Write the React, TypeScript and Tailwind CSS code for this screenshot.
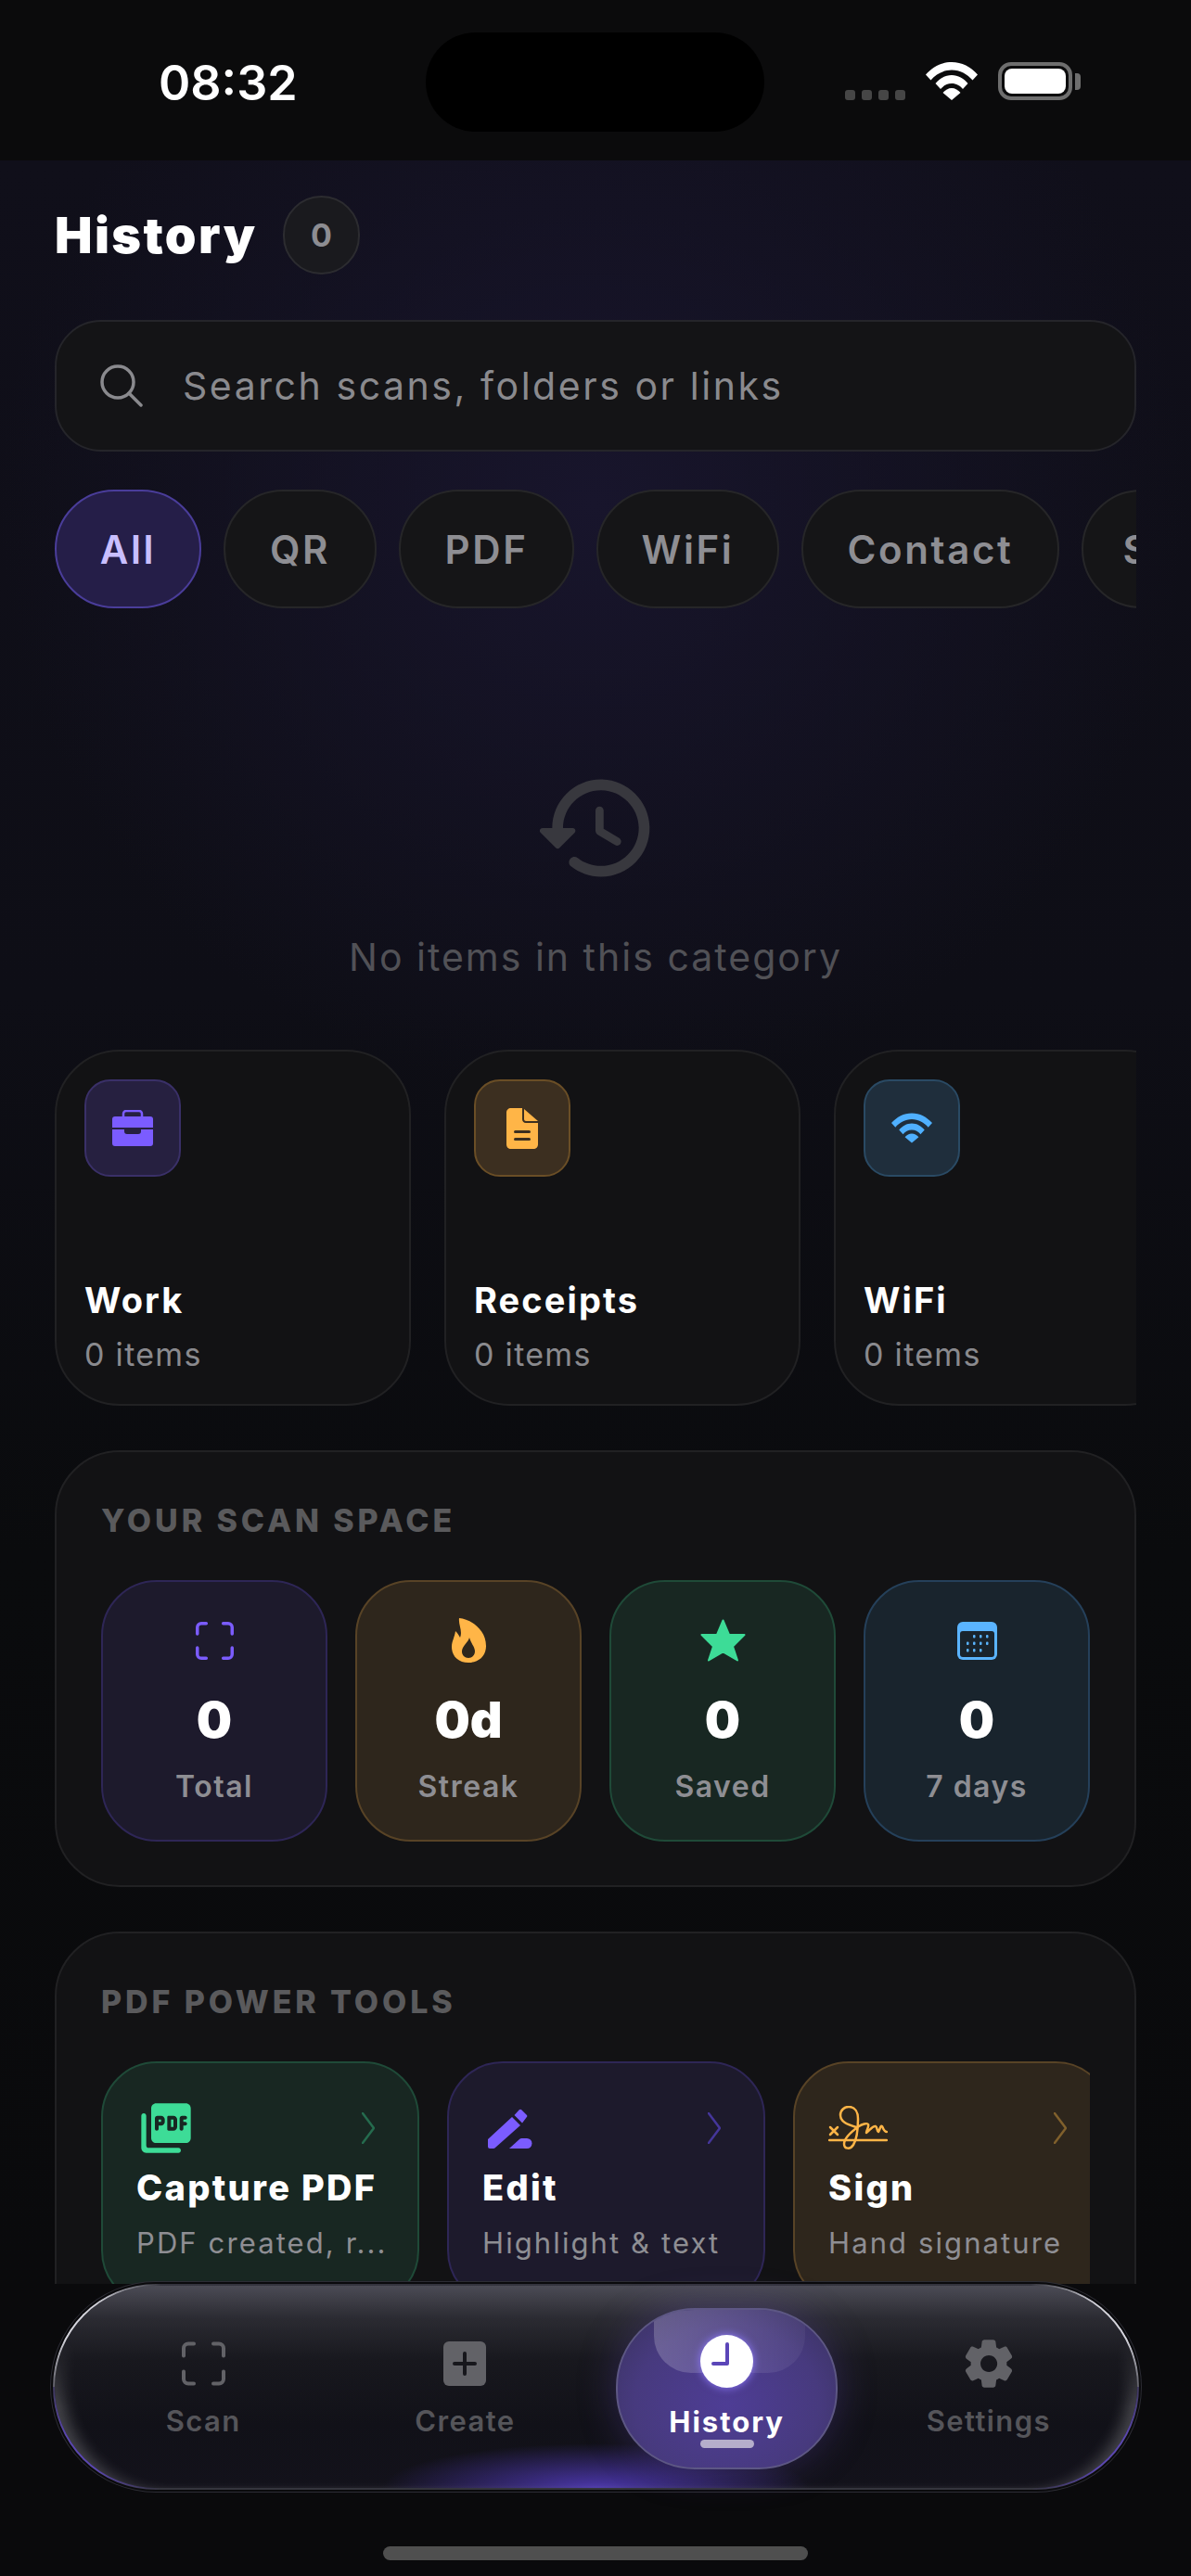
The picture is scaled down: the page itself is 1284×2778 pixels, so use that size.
import React from 'react';

const HistoryPath = 'M13.26 3C8.17 2.86 4 6.95 4 12H2.21c-.45 0-.67.54-.35.85l2.79 2.8c.2.2.51.2.71 0l2.79-2.8c.31-.31.09-.85-.36-.85H6c0-3.9 3.18-7.05 7.1-7 3.72.05 6.85 3.18 6.9 6.9.05 3.91-3.1 7.1-7 7.1-1.61 0-3.1-.55-4.28-1.48-.4-.31-.96-.28-1.32.08-.42.42-.39 1.13.08 1.49C9 20.29 10.91 21 13 21c5.05 0 9.14-4.17 9-9.26-.13-4.69-4.05-8.61-8.74-8.74zm-.51 5c-.41 0-.75.34-.75.75v3.68c0 .35.19.68.49.86l3.12 1.85c.36.21.82.09 1.03-.26.21-.36.09-.82-.26-1.03l-2.88-1.71v-3.4c0-.4-.34-.74-.75-.74z';
const PdfPath = 'M20 2H8c-1.1 0-2 .9-2 2v12c0 1.1.9 2 2 2h12c1.1 0 2-.9 2-2V4c0-1.1-.9-2-2-2zm-8.5 7.5c0 .83-.67 1.5-1.5 1.5H9v1.25c0 .41-.34.75-.75.75s-.75-.34-.75-.75V8c0-.55.45-1 1-1H10c.83 0 1.5.67 1.5 1.5v1zm5 2c0 .83-.67 1.5-1.5 1.5h-2c-.28 0-.5-.22-.5-.5v-5c0-.28.22-.5.5-.5h2c.83 0 1.5.67 1.5 1.5v3zm4-3.75c0 .41-.34.75-.75.75H19v1h.75c.41 0 .75.34.75.75s-.34.75-.75.75H19v1.25c0 .41-.34.75-.75.75s-.75-.34-.75-.75V8c0-.55.45-1 1-1h1.25c.41 0 .75.34.75.75zM9 9.5h1v-1H9v1zM3 6c-.55 0-1 .45-1 1v13c0 1.1.9 2 2 2h13c.55 0 1-.45 1-1s-.45-1-1-1H5c-.55 0-1-.45-1-1V7c0-.55-.45-1-1-1zm11 5.5h1v-3h-1v3z';

const WifiIcon = ({ className }: { className: string }) => (
  <svg viewBox="0 0 56 41" className={className} fill="currentColor">
    <path d="M0 13.5C7.5 5 17 0 28 0s20.500 5 28 13.500l-5.500 6C45 13 37 8.500 28 8.500S11 13 5.500 19.500z" />
    <path d="M10.500 23C15 17.500 21 14 28 14s13 3.500 17.500 9L40 29c-3-3.500-7-6-12-6s-9 2.500-12 6z" />
    <path d="M18.500 33c2.500-3 6-5 9.500-5s7 2 9.500 5L28 41z" />
  </svg>
);

const ScanIcon = ({ className }: { className: string }) => (
  <svg viewBox="0 0 47 47" className={className} fill="none" stroke="currentColor" strokeWidth="4" strokeLinecap="round">
    <path d="M2 15V7a5 5 0 0 1 5-5h6M34 2h6a5 5 0 0 1 5 5v8M45 32v8a5 5 0 0 1-5 5h-6M13 45H7a5 5 0 0 1-5-5v-8" />
  </svg>
);

const Chevron = ({ className }: { className: string }) => (
  <svg viewBox="0 0 14 34" className={`w-[14px] h-[34px] ${className}`} fill="none" stroke="currentColor" strokeWidth="2.500" strokeLinecap="round" strokeLinejoin="round">
    <path d="M1 1l12 16L1 33" />
  </svg>
);

const BriefcaseIcon = () => (
  <svg viewBox="0 0 44 39" className="w-[44px] h-[39px] text-[#7b5cff]" fill="currentColor">
    <path d="M12 8V4a3 3 0 0 1 3-3h14a3 3 0 0 1 3 3v4" fill="none" stroke="currentColor" strokeWidth="2.500" />
    <path d="M3 7h38a3 3 0 0 1 3 3v9H0v-9a3 3 0 0 1 3-3z" />
    <path d="M0 21h13v2a3 3 0 0 0 3 3h12a3 3 0 0 0 3-3v-2h13v15a3 3 0 0 1-3 3H3a3 3 0 0 1-3-3z" />
  </svg>
);

const DocIcon = () => (
  <svg viewBox="0 0 34 44" className="w-[34px] h-[44px] text-[#ffb547]" fill="currentColor">
    <path d="M5 0h12v12c0 2 1.500 4 4 4h13v23c0 3-2 5-5 5H5c-3 0-5-2-5-5V5c0-3 2-5 5-5z" />
    <path d="M19 1l15 13H21c-1 0-2-1-2-2z" />
    <rect x="8" y="24" width="18" height="3" rx="1.500" fill="#3c2f20" />
    <rect x="8" y="32" width="18" height="3" rx="1.500" fill="#3c2f20" />
  </svg>
);

const FlameIcon = () => (
  <svg viewBox="0 0 37 48" className="w-[37px] h-[48px] text-[#ffb547]" fill="currentColor">
    <path fillRule="evenodd" d="M8 0c12 1 29 12 29 30 0 11-8 18-19 18S0 41 0 31c0-6 3-10 4-17 3 3 4 5 5 7 3-7-2-14-1-21zm11 21c-1 5-8 9-8 15 0 4 3 7 7 7s7-3 7-7c0-5-4-8-6-15z" />
  </svg>
);

const StarIcon = () => (
  <svg viewBox="0 0 49 46" className="w-[49px] h-[46px] text-[#3ddc97]" fill="currentColor" stroke="currentColor" strokeWidth="2" strokeLinejoin="round">
    <path d="M24.500 1.500L31 17h16.500L35 29.500 40 44.500 24.500 35.500 9 44.500l5-15L1.500 17H18z" />
  </svg>
);

const CalendarIcon = () => (
  <svg viewBox="0 0 43 41" className="w-[43px] h-[41px]">
    <rect width="43" height="41" rx="6" fill="#5ab4ff" />
    <rect x="3" y="10" width="37" height="28" rx="3" fill="#19242d" />
    <g fill="#5ab4ff">
      <rect x="17" y="14" width="2.500" height="3.500" rx="1" />
      <rect x="24" y="14" width="2.500" height="3.500" rx="1" />
      <rect x="31" y="14" width="2.500" height="3.500" rx="1" />
      <rect x="10" y="21.500" width="2.500" height="3.500" rx="1" />
      <rect x="17" y="21.500" width="2.500" height="3.500" rx="1" />
      <rect x="24" y="21.500" width="2.500" height="3.500" rx="1" />
      <rect x="31" y="21.500" width="2.500" height="3.500" rx="1" />
      <rect x="10" y="29" width="2.500" height="3.500" rx="1" />
      <rect x="17" y="29" width="2.500" height="3.500" rx="1" />
      <rect x="24" y="29" width="2.500" height="3.500" rx="1" />
    </g>
  </svg>
);

const EditIcon = () => (
  <svg viewBox="0 0 49 43" className="ml-[5px] w-[49px] h-[43px] text-[#7b5cff]" fill="currentColor">
    <path d="M1 33L27 9l9 9-27 24a3 3 0 0 1-2 1H3a2 2 0 0 1-2-2z" />
    <path d="M29.500 7l5-5.500a2 2 0 0 1 3 0l5 5a2 2 0 0 1 0 3L38 15.500z" />
    <path d="M24 43l11-10a4 4 0 0 1 2.500-1H43a5.500 5.500 0 0 1 0 11z" />
  </svg>
);

const SignIcon = () => (
  <svg viewBox="0 0 64 48" className="w-[64px] h-[48px] text-[#ffb547]" fill="none" stroke="currentColor" strokeWidth="2.500" strokeLinecap="round" strokeLinejoin="round">
    <path d="M1 37h62" />
    <path d="M2 23l8 8M10 23l-8 8" />
    <path d="M30 23C20 20 13 17 13 10 13 4 18 1 22 1c7 0 10 6 10 13 0 12-2 23-5 28-3 5-10 5-10-1 0-7 9-14 16-19 3-2 9-4 10-2 1 3-2 6-2 9 4-3 7-8 10-7 2 1 1 5 3 6 2-3 2-7 4-6 1 2 2 6 5 6" />
  </svg>
);

const CreateIcon = () => (
  <svg viewBox="0 0 46 48" className="w-[46px] h-[48px]">
    <rect width="46" height="48" rx="6" fill="#626267" />
    <path d="M23 13v22M12 24h22" stroke="#17171c" strokeWidth="4" strokeLinecap="round" />
  </svg>
);

const GearIcon = () => (
  <svg viewBox="0 0 24 24" className="w-[62px] h-[62px] text-[#626267]" fill="currentColor">
    <path d="M19.500 12c0-.23-.01-.45-.03-.68l1.860-1.410c.4-.3.51-.86.26-1.300l-1.870-3.230c-.25-.44-.79-.62-1.250-.42l-2.150.91c-.37-.26-.76-.49-1.170-.68l-.29-2.310c-.06-.5-.49-.88-.99-.88h-3.730c-.51 0-.94.38-1 .88l-.29 2.310c-.41.19-.8.42-1.170.68l-2.150-.91c-.46-.2-1-.02-1.250.42L2.410 8.620c-.25.44-.14.99.26 1.300l1.860 1.410c-.04.45-.04.9 0 1.350l-1.860 1.410c-.4.3-.51.86-.26 1.300l1.870 3.230c.25.44.79.62 1.250.42l2.150-.91c.37.26.76.49 1.170.68l.29 2.310c.06.5.49.88.99.88h3.730c.5 0 .93-.38.99-.88l.29-2.310c.41-.19.8-.42 1.170-.68l2.150.91c.46.2 1 .02 1.250-.42l1.870-3.230c.25-.44.14-.99-.26-1.300l-1.860-1.410c.03-.23.04-.45.04-.68zm-7.460 3.500c-1.930 0-3.500-1.570-3.500-3.500s1.570-3.500 3.500-3.500 3.500 1.570 3.500 3.500-1.570 3.500-3.500 3.500z" />
  </svg>
);

const filters = [
  { label: 'All', className: 'w-[158px] bg-[#251e48] border-[#4a3d9a] text-[#c9bfff]' },
  { label: 'QR', className: 'w-[165px] bg-[#151517] border-[#262628] text-[#8e8e93]' },
  { label: 'PDF', className: 'w-[189px] bg-[#151517] border-[#262628] text-[#8e8e93]' },
  { label: 'WiFi', className: 'w-[197px] bg-[#151517] border-[#262628] text-[#8e8e93]' },
  { label: 'Contact', className: 'w-[278px] bg-[#151517] border-[#262628] text-[#8e8e93]' },
  { label: 'SMS', className: 'w-[190px] bg-[#151517] border-[#262628] text-[#8e8e93]' },
];

const folders = [
  { name: 'Work', box: 'bg-[#262040] border-[#3a3068]', icon: <BriefcaseIcon /> },
  { name: 'Receipts', box: 'bg-[#3c2f20] border-[#6a4e26]', icon: <DocIcon /> },
  { name: 'WiFi', box: 'bg-[#1f2e3c] border-[#2a4a64]', icon: <WifiIcon className="w-[44px] h-[33px] text-[#4fb0ff]" /> },
];

const stats = [
  { value: '0', label: 'Total', tile: 'bg-[#1d1a2c] border-[#2e2656]', icon: <ScanIcon className="w-[41px] h-[41px] text-[#7b5cff]" /> },
  { value: '0d', label: 'Streak', tile: 'bg-[#2e261c] border-[#584326]', icon: <FlameIcon /> },
  { value: '0', label: 'Saved', tile: 'bg-[#182722] border-[#1f4a38]', icon: <StarIcon /> },
  { value: '0', label: '7 days', tile: 'bg-[#19242d] border-[#25405a]', icon: <CalendarIcon /> },
];

const tools = [
  {
    title: 'Capture PDF',
    sub: 'PDF created, r...',
    tile: 'bg-[#182722] border-[#1f4a38]',
    chevron: 'text-[#256b4e]',
    icon: (
      <svg viewBox="0 0 24 24" className="w-[64px] h-[64px] text-[#3ddc97]" fill="currentColor">
        <path d={PdfPath} />
      </svg>
    ),
  },
  { title: 'Edit', sub: 'Highlight & text', tile: 'bg-[#1d1a2c] border-[#2e2656]', chevron: 'text-[#45369a]', icon: <EditIcon /> },
  { title: 'Sign', sub: 'Hand signature', tile: 'bg-[#2e261c] border-[#584326]', chevron: 'text-[#80602c]', icon: <SignIcon /> },
];

const navItems = [
  { label: 'Scan', icon: <ScanIcon className="w-[47px] h-[48px] text-[#626267]" /> },
  { label: 'Create', icon: <CreateIcon /> },
  { label: 'Settings', icon: <GearIcon /> },
];

const NavItem = ({ label, icon }: { label: string; icon: React.ReactNode }) => (
  <div className="relative flex flex-col items-center pt-[53px]">
    <div className="h-[62px] flex items-center justify-center">{icon}</div>
    <span className="mt-[11px] text-[31px] leading-[40px] font-semibold tracking-[1.4px] text-[#55555a]">{label}</span>
  </div>
);

export default function App() {
  return (
    <div className="w-full h-[2778px] flex flex-col overflow-hidden bg-[#0a0a0c] font-['Inter',sans-serif] text-white">
      {/* Status bar */}
      <div className="h-[173px] shrink-0 bg-[#0b0b0c] flex items-start">
        <div className="w-[459px] pl-[171px] pt-[60px] text-[52px] leading-[60px] font-semibold">08:32</div>
        <div className="w-[365px] h-[107px] mt-[35px] rounded-[54px] bg-black" />
        <div className="flex items-end ml-[87px] mt-[67px]">
          <div className="flex gap-[7px] mr-[22px]">
            <div className="w-[11px] h-[11px] rounded-[3px] bg-[#464646]" />
            <div className="w-[11px] h-[11px] rounded-[3px] bg-[#464646]" />
            <div className="w-[11px] h-[11px] rounded-[3px] bg-[#464646]" />
            <div className="w-[11px] h-[11px] rounded-[3px] bg-[#464646]" />
          </div>
          <WifiIcon className="w-[56px] h-[41px] text-white" />
          <div className="ml-[22px] w-[80px] h-[41px] rounded-[14px] border-[4px] border-[#6e6e6e] p-[3px]">
            <div className="w-full h-full rounded-[8px] bg-white" />
          </div>
          <div className="ml-[3px] mb-[11px] w-[6px] h-[18px] rounded-r-[4px] bg-[#6e6e6e]" />
        </div>
      </div>

      {/* Scroll area */}
      <main className="h-[2290px] shrink-0 overflow-hidden px-[59px] pt-[38px] bg-[radial-gradient(circle_at_640px_370px,#18152c_0px,#18152c00_640px),linear-gradient(180deg,#100f1a_0px,#0e0e16_900px,#0a0b0d_1500px,#0a0a0c_2290px)]">
        <div className="flex items-center h-[85px]">
          <h1 className="w-[215px] whitespace-nowrap text-[54px] leading-[60px] font-black tracking-[2.4px]">History</h1>
          <div className="ml-[31px] w-[83px] h-[85px] rounded-full bg-[#1a1a1e] border-2 border-[#2c2c30] flex items-center justify-center text-[34px] font-bold text-[#8d8d92]">0</div>
        </div>

        <div className="mt-[49px] h-[142px] rounded-[50px] bg-[#141416] border-2 border-[#25252a] flex items-center pl-[47px]">
          <svg viewBox="0 0 46 46" className="w-[46px] h-[46px] text-[#8a8a8e]" fill="none" stroke="currentColor" strokeWidth="3.500" strokeLinecap="round">
            <circle cx="19" cy="19" r="17" />
            <path d="M31 31l13 13" />
          </svg>
          <span className="ml-[43px] text-[41px] leading-[50px] tracking-[2.55px] text-[#8a8a8e]">Search scans, folders or links</span>
        </div>

        <div className="mt-[41px] flex gap-[24px] overflow-hidden h-[128px]">
          {filters.map((f) => (
            <div key={f.label} className={`shrink-0 h-[128px] rounded-[64px] border-2 flex items-center justify-center text-[42px] font-semibold tracking-[2.6px] ${f.className}`}>
              {f.label}
            </div>
          ))}
        </div>

        <div className="h-[476px] flex flex-col items-center pt-[167px]">
          <svg viewBox="0 0 24 24" className="w-[140px] h-[140px] text-[#38383e]" fill="currentColor">
            <path d={HistoryPath} />
          </svg>
          <p className="mt-[44px] text-[41px] leading-[50px] tracking-[2px] text-[#515156]">No items in this category</p>
        </div>

        {/* Folders */}
        <div className="flex gap-[36px] overflow-hidden">
          {folders.map((f) => (
            <div key={f.name} className="shrink-0 w-[384px] h-[384px] rounded-[70px] bg-[#121214] border-2 border-[#212123] p-[30px] flex flex-col">
              <div className={`w-[104px] h-[105px] rounded-[28px] border-2 flex items-center justify-center ${f.box}`}>{f.icon}</div>
              <div className="mt-[110px] text-[38px] leading-[46px] font-bold tracking-[2.1px]">{f.name}</div>
              <div className="mt-[15px] text-[34px] leading-[42px] tracking-[1.3px] text-[#8a8a8e]">0 items</div>
            </div>
          ))}
        </div>

        {/* Your scan space */}
        <section className="mt-[48px] h-[471px] rounded-[70px] bg-[#121214] border-2 border-[#212123] px-[48px] pt-[54px]">
          <h2 className="text-[34px] leading-[40px] font-extrabold tracking-[3.9px] text-[#5a5a5c]">YOUR SCAN SPACE</h2>
          <div className="mt-[44px] grid grid-cols-4 gap-[30px]">
            {stats.map((s) => (
              <div key={s.label} className={`h-[282px] rounded-[60px] border-2 flex flex-col items-center pt-[39px] ${s.tile}`}>
                <div className="h-[48px] flex items-center justify-center">{s.icon}</div>
                <div className="mt-[32px] text-[54px] leading-[60px] font-black">{s.value}</div>
                <div className="mt-[22px] text-[32px] leading-[40px] font-semibold tracking-[1.5px] text-[#8e8e93]">{s.label}</div>
              </div>
            ))}
          </div>
        </section>

        {/* PDF power tools */}
        <section className="mt-[48px] h-[471px] rounded-[70px] bg-[#121214] border-2 border-[#212123] px-[48px] pt-[54px]">
          <h2 className="text-[34px] leading-[40px] font-extrabold tracking-[3.9px] text-[#5a5a5c]">PDF POWER TOOLS</h2>
          <div className="mt-[44px] flex gap-[30px] overflow-hidden">
            {tools.map((t) => (
              <div key={t.title} className={`shrink-0 w-[343px] h-[264px] rounded-[60px] border-2 pl-[36px] pr-[46px] pt-[38px] ${t.tile}`}>
                <div className="h-[64px] flex items-center justify-between">
                  {t.icon}
                  <Chevron className={t.chevron} />
                </div>
                <div className="mt-[10px] whitespace-nowrap text-[38px] leading-[44px] font-extrabold tracking-[2.3px]">{t.title}</div>
                <div className="mt-[18px] whitespace-nowrap text-[31px] leading-[40px] tracking-[2.1px] text-[#8e8e93]">{t.sub}</div>
              </div>
            ))}
          </div>
        </section>
      </main>

      {/* Tab bar */}
      <nav className="relative ml-[57px] w-[1171px] h-[222px] shrink-0 rounded-[111px] border-2 border-[#34343d] grid grid-cols-4 px-[19px] shadow-[0_0_0_2px_#0a0a0c,0_0_0_3px_#2c2c34] bg-[radial-gradient(ellipse_230px_48px_at_50%_100%,#4a36a8_0%,#4a36a800_100%),linear-gradient(180deg,#4b4b55_0px,#2b2b32_35px,#18181e_80px,#111118_150px,#13121b_222px)]">
        {/* glass rim: bright top corners, purple bottom corners, soft inner edge */}
        <div className="absolute left-[-2px] top-[-2px] w-[130px] h-[111px] rounded-tl-[111px] border-l-2 border-t-2 border-[#d5d5dc] [mask-image:radial-gradient(circle_at_30px_40px,#000_25px,transparent_95px)]" />
        <div className="absolute right-[-2px] top-[-2px] w-[130px] h-[111px] rounded-tr-[111px] border-r-2 border-t-2 border-[#d5d5dc] [mask-image:radial-gradient(circle_at_100px_40px,#000_25px,transparent_95px)]" />
        <div className="absolute left-[-2px] bottom-[-2px] w-[130px] h-[111px] rounded-bl-[111px] border-l-2 border-b-2 border-[#5a46b0] [mask-image:radial-gradient(circle_at_30px_70px,#000_25px,transparent_95px)]" />
        <div className="absolute right-[-2px] bottom-[-2px] w-[130px] h-[111px] rounded-br-[111px] border-r-2 border-b-2 border-[#5a46b0] [mask-image:radial-gradient(circle_at_100px_70px,#000_25px,transparent_95px)]" />
        <div className="absolute inset-0 rounded-[109px] shadow-[inset_22px_-5px_16px_-14px_#ffffff38,inset_-22px_-5px_16px_-14px_#ffffff38] [mask-image:linear-gradient(180deg,transparent_60px,#000_130px)]" />
        <NavItem {...navItems[0]} />
        <NavItem {...navItems[1]} />
        <div className="relative flex justify-center pt-[24px]">
          <div className="relative overflow-hidden w-[239px] h-[174px] rounded-[85px] border-2 border-[#5d5784] bg-[radial-gradient(ellipse_at_50%_60%,#4e3d95_0%,#473a7e_60%,#38315c_100%)] flex flex-col items-center shadow-[0_0_40px_#5b46a859]">
            <div className="absolute left-[39px] top-[-2px] w-[163px] h-[70px] rounded-b-[40px] bg-[linear-gradient(90deg,#ffffff33,#ffffff0c)]" />
            <div className="relative mt-[27px] w-[57px] h-[57px] rounded-full bg-white flex items-center justify-center shadow-[0_0_10px_#8f7bff]">
              <svg viewBox="0 0 57 57" className="w-[57px] h-[57px]" fill="none" stroke="#5b46b8" strokeWidth="4" strokeLinecap="round" strokeLinejoin="round">
                <path d="M29 10v21H14" />
              </svg>
            </div>
            <span className="relative mt-[17px] text-[31px] leading-[40px] font-bold tracking-[2px] text-white">History</span>
            <div className="relative mt-[-1px] w-[58px] h-[9px] rounded-full bg-[#b5aecb]" />
          </div>
        </div>
        <NavItem {...navItems[2]} />
      </nav>

      {/* Home indicator */}
      <div className="flex-1 bg-[#0a0a0c] flex justify-center pt-[61px]">
        <div className="w-[458px] h-[15px] rounded-full bg-[#4f4f4f]" />
      </div>
    </div>
  );
}
